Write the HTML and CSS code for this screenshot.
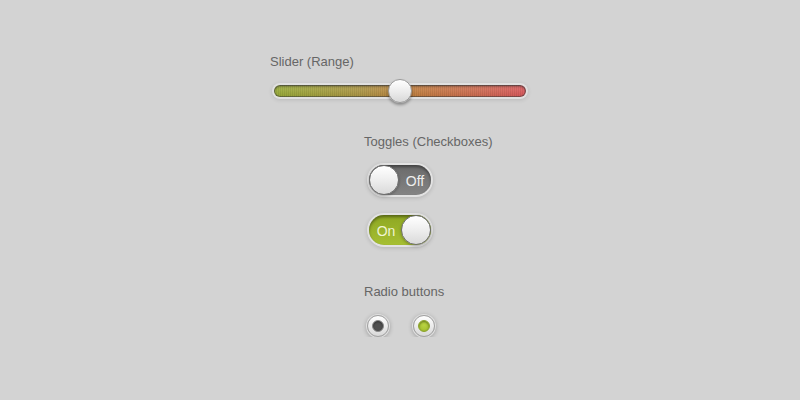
FILE: index.html
```html
<!DOCTYPE html>
<html lang="en">
<head>
  <meta charset="UTF-8">
  <title>Form Controls</title>
  <link rel="stylesheet" href="styles.css">
</head>
<body>
  <div class="panel">
    <div class="label">Slider (Range)</div>
    <input type="range" class="slider" min="0" max="100" value="50">

    <div class="group">
      <div class="label">Toggles (Checkboxes)</div>
      <label class="toggle">
        <span class="knob"></span>
        <span class="state">Off</span>
      </label>
      <label class="toggle on">
        <span class="knob"></span>
        <span class="state">On</span>
      </label>
    </div>

    <div class="group radios-group">
      <div class="label">Radio buttons</div>
      <div class="radios">
        <span class="radio"><span class="dot"></span></span>
        <span class="radio checked"><span class="dot"></span></span>
      </div>
    </div>
  </div>
</body>
</html>
```

FILE: styles.css
```css
body {
  margin: 0;
  background: #d3d3d3;
  font-family: 'Liberation Sans', Arial, sans-serif;
}

.panel {
  width: 260px;
  margin: 0 auto;
  padding-top: 54px;
}

.label {
  font-size: 13px;
  line-height: 16px;
  color: #666;
}

/* slider */
.slider {
  -webkit-appearance: none;
  appearance: none;
  display: block;
  width: 252px;
  height: 26px;
  margin: 8px 0 0 4px;
  padding: 0;
  background: transparent;
}

.slider::-webkit-slider-runnable-track {
  height: 12px;
  border-radius: 6px;
  background:
    repeating-linear-gradient(90deg, rgba(0,0,0,0.07) 0 1px, transparent 1px 2px),
    linear-gradient(to bottom, rgba(255,255,255,0.15), rgba(0,0,0,0.08)),
    linear-gradient(to right, #9db137 0%, #b39a45 35%, #c9833f 55%, #d66f52 80%, #e25a5e 100%);
  box-shadow:
    inset 0 0 0 1px rgba(60,60,60,0.55),
    inset 0 2px 2px rgba(0,0,0,0.3),
    0 0 0 2px #e0e0e0,
    0 1px 4px 2px rgba(0,0,0,0.12);
}

.slider::-webkit-slider-thumb {
  -webkit-appearance: none;
  appearance: none;
  width: 24px;
  height: 24px;
  margin-top: -6px;
  border-radius: 50%;
  border: 1px solid #9a9a9a;
  box-sizing: border-box;
  background: linear-gradient(to bottom, #ffffff, #e9e9e9 60%, #d8d8d8);
  box-shadow: 0 2px 3px rgba(0,0,0,0.35), inset 0 1px 0 #fff;
}

/* toggles */
.group {
  margin-top: 30px;
  padding-left: 94px;
}

.toggle {
  display: flex;
  align-items: center;
  width: 62px;
  height: 30px;
  margin: 15px 0 0 5px;
  border-radius: 15px;
  background: linear-gradient(to bottom, #6a6a6a, #848484);
  box-shadow:
    inset 0 2px 3px rgba(0,0,0,0.4),
    0 0 0 2px #e2e2e2,
    0 1px 4px 2px rgba(0,0,0,0.15);
}

.toggle + .toggle {
  margin-top: 20px;
}

.toggle.on {
  flex-direction: row-reverse;
  background: linear-gradient(to bottom, #8ea722, #a6bf33);
}

.knob {
  flex: none;
  width: 30px;
  height: 30px;
  border-radius: 50%;
  box-sizing: border-box;
  border: 1px solid #6e6e6e;
  background: linear-gradient(to bottom, #ffffff, #ececec 55%, #dadada);
  box-shadow: 0 1px 3px rgba(0,0,0,0.3), inset 0 1px 0 #fff;
}

.state {
  flex: 1;
  text-align: center;
  font-size: 14px;
  color: #eeeeee;
  padding-top: 1px;
}

.toggle.on .state {
  color: #f0f5d2;
  padding-left: 2px;
}

/* radios */
.radios-group {
  margin-top: 39px;
}

.radios {
  display: flex;
  gap: 24px;
  margin: 15px 0 0 3px;
}

.radio {
  display: flex;
  align-items: center;
  justify-content: center;
  width: 22px;
  height: 22px;
  border-radius: 50%;
  box-sizing: border-box;
  border: 1px solid #a0a0a0;
  background: linear-gradient(to bottom, #ffffff, #d8d8d8);
  box-shadow: 0 0 0 1px #e0e0e0, 0 1px 4px 1px rgba(0,0,0,0.25);
}

.dot {
  width: 12px;
  height: 12px;
  border-radius: 50%;
  box-sizing: border-box;
  border: 1px solid #8a8a8a;
  background: #505050;
  box-shadow: inset 0 1px 2px rgba(0,0,0,0.4);
}

.radio.checked .dot {
  border-color: #8aa22a;
  background: radial-gradient(circle at 50% 40%, #b9d342, #9fbb2a);
}
```
